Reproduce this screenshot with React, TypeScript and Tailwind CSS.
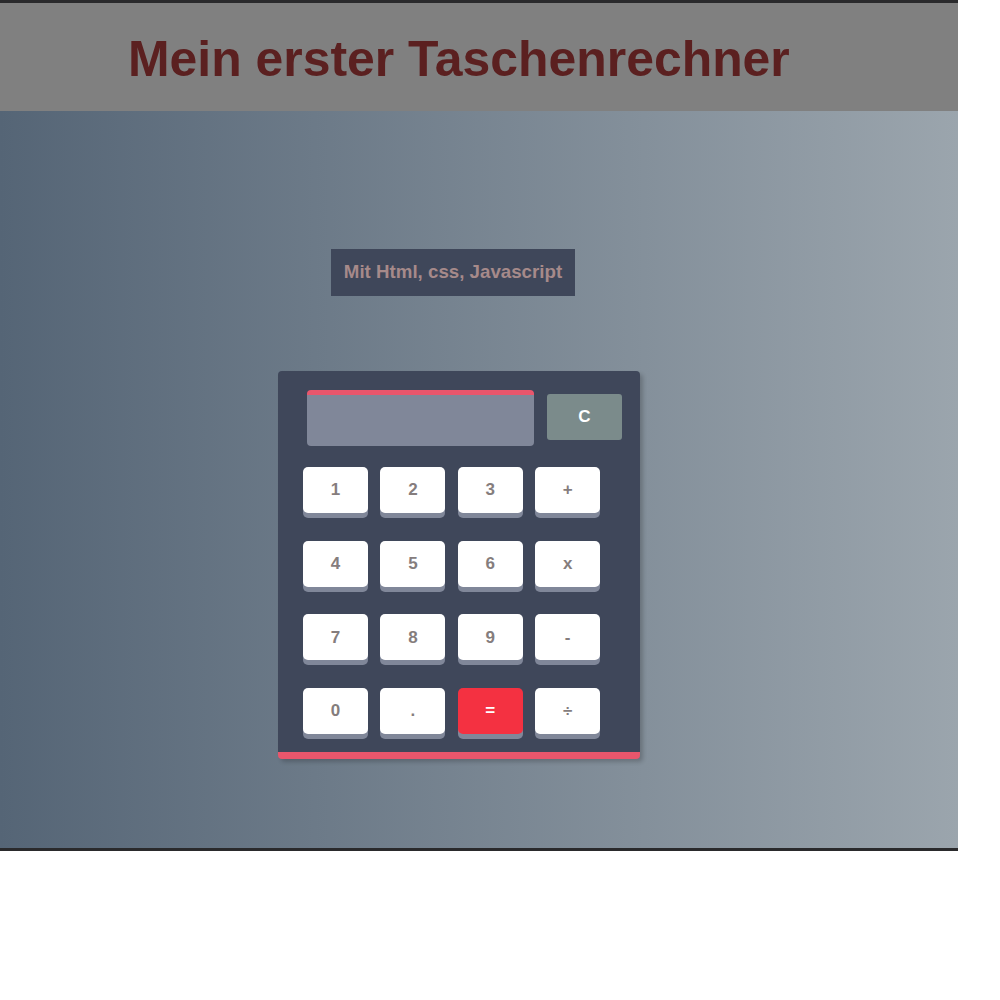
import React from "react";

const keys: { label: string; red?: boolean }[] = [
  { label: "1" }, { label: "2" }, { label: "3" }, { label: "+" },
  { label: "4" }, { label: "5" }, { label: "6" }, { label: "x" },
  { label: "7" }, { label: "8" }, { label: "9" }, { label: "-" },
  { label: "0" }, { label: "." }, { label: "=", red: true }, { label: "÷" },
];

export default function App() {
  return (
    <div className="w-[958px] border-t-[3px] border-b-[3px] border-[#2a2a2c] font-['Liberation_Sans',Arial,sans-serif]">
      <header className="h-[108px] bg-[#808080] flex items-center pl-[128px] pt-[6px]">
        <h1 className="text-[49.9px] font-bold text-[#5b2020] leading-none">
          Mein erster Taschenrechner
        </h1>
      </header>
      <main className="h-[737px] bg-[linear-gradient(to_right,#556576,#9ba5ad)] flex flex-col items-start">
        <div className="ml-[331px] mt-[138px] w-[244px] h-[47px] bg-[#3f475a] flex items-center justify-center">
          <h3 className="text-[18.72px] font-bold text-[#a68a8a]">Mit Html, css, Javascript</h3>
        </div>
        <div className="ml-[278px] mt-[75px] w-[362px] bg-[#3f475a] rounded-[4px] border-b-[7px] border-[#e9566c] shadow-[3px_3px_4px_rgba(0,0,0,0.2)] pt-[19px] pb-[18px]">
          <div className="flex items-start pl-[29px]">
            <div className="w-[227px] h-[56px] bg-[#808799] rounded-[4px] border-t-[5px] border-[#e9566c]" />
            <button className="ml-[13px] mt-[4px] w-[75px] h-[46px] bg-[#7b8b8b] rounded-[3px] text-white font-bold text-[17px]">
              C
            </button>
          </div>
          <div className="mt-[21px] ml-[25px] grid grid-cols-[repeat(4,65px)] gap-x-[12.4px] gap-y-[27.67px]">
            {keys.map((k) => (
              <button
                key={k.label}
                className={
                  k.red
                    ? "h-[46px] rounded-[5px] bg-[#f43141] text-white font-bold text-[17px] shadow-[0_5px_0_#808799]"
                    : "h-[46px] rounded-[5px] bg-white text-[#857d7d] font-bold text-[17px] shadow-[0_5px_0_#808799]"
                }
              >
                {k.label}
              </button>
            ))}
          </div>
        </div>
      </main>
    </div>
  );
}
